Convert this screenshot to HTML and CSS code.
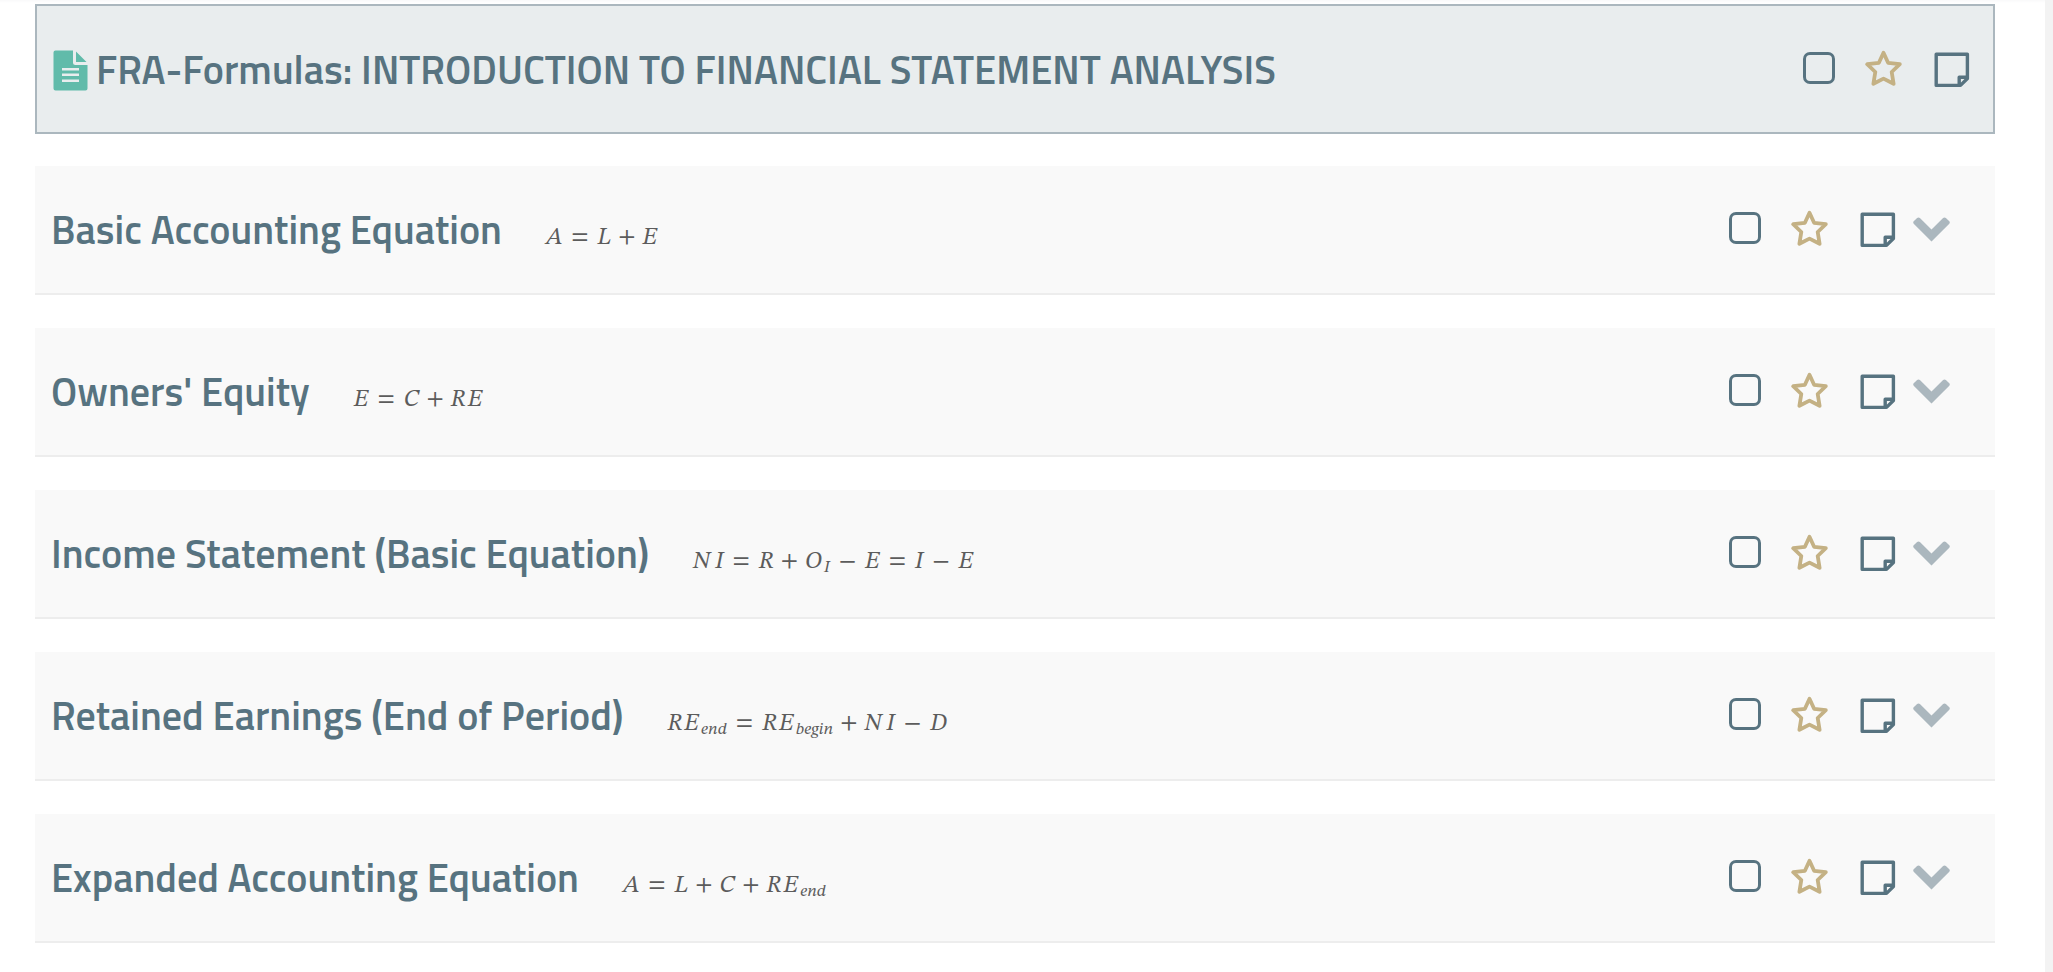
FILE: index.html
```html
<!DOCTYPE html>
<html lang="en">
<head>
<meta charset="utf-8">
<title>FRA-Formulas</title>
<link rel="stylesheet" href="styles.css">
</head>
<body>
<svg class="sprite" aria-hidden="true">
  <symbol id="star" viewBox="0 0 37 37"><path d="M18.5 2.8 23.1 12.8 34.8 14.2 26.7 22 28.6 33.8 18.5 28.6 8.4 33.8 10.3 22 2.2 14.2 13.9 12.8Z" fill="none" stroke="currentColor" stroke-width="3.8" stroke-linejoin="round"/></symbol>
  <symbol id="note" viewBox="0 0 36 36"><path d="M2.2 2.2H33.4V26.5L26.5 33.4H2.2ZM33.4 25.2H25.2V33.4" fill="none" stroke="currentColor" stroke-width="3.4" stroke-linejoin="round"/></symbol>
  <symbol id="chevron" viewBox="0 0 37 25"><path d="M6.9 1.1 18.5 12.6 30.1 1.1Q31.500 -.1 32.900 1.1L36.300 4.300Q37.300 5.500 36.300 6.700L18.500 24.500 .7 6.700Q-.3 5.500 .7 4.300L4.100 1.1Q5.500 -.1 6.900 1.1Z" fill="currentColor"/></symbol>
</svg>
<main class="page">
  <header class="row row-head">
    <h1 class="title"><svg class="file" viewBox="0 0 35 41" aria-hidden="true"><path d="M2.500 .5H20V12.500Q20 15 22.500 15H34.500V38.500Q34.500 40.500 32.500 40.500H2.500Q.5 40.500 .5 38.500V2.500Q.5 .5 2.500 .5ZM23 1.500 33.500 12H23ZM9 18V20.500H26V18ZM9 23.500V26H26V23.500ZM9 29.500V32H26V29.500Z" fill="currentColor" fill-rule="evenodd"/></svg>FRA-Formulas: INTRODUCTION TO FINANCIAL STATEMENT ANALYSIS</h1>
    <div class="tools"><input class="check" type="checkbox" aria-label="Mark all formulas"><button class="tool star" aria-label="Favourite"><svg><use href="#star"/></svg></button><button class="tool note" aria-label="Note"><svg><use href="#note"/></svg></button></div>
  </header>
  <section class="row">
    <h2 class="title">Basic Accounting Equation</h2>
    <p class="formula"><i>A</i><b>=</b><i>L</i><b class="plus">+</b><i>E</i></p>
    <div class="tools"><input class="check" type="checkbox" aria-label="Basic Accounting Equation"><button class="tool star" aria-label="Favourite"><svg><use href="#star"/></svg></button><button class="tool note" aria-label="Note"><svg><use href="#note"/></svg></button><button class="tool chevron" aria-label="Expand"><svg><use href="#chevron"/></svg></button></div>
  </section>
  <section class="row">
    <h2 class="title">Owners' Equity</h2>
    <p class="formula"><i>E</i><b>=</b><i>C</i><b class="plus">+</b><i>R</i><i>E</i></p>
    <div class="tools"><input class="check" type="checkbox" aria-label="Owners' Equity"><button class="tool star" aria-label="Favourite"><svg><use href="#star"/></svg></button><button class="tool note" aria-label="Note"><svg><use href="#note"/></svg></button><button class="tool chevron" aria-label="Expand"><svg><use href="#chevron"/></svg></button></div>
  </section>
  <section class="row">
    <h2 class="title">Income Statement (Basic Equation)</h2>
    <p class="formula"><i class="wide">N</i><i>I</i><b>=</b><i>R</i><b class="plus">+</b><i>O</i><sub>I</sub><b>−</b><i>E</i><b>=</b><i>I</i><b>−</b><i>E</i></p>
    <div class="tools"><input class="check" type="checkbox" aria-label="Income Statement"><button class="tool star" aria-label="Favourite"><svg><use href="#star"/></svg></button><button class="tool note" aria-label="Note"><svg><use href="#note"/></svg></button><button class="tool chevron" aria-label="Expand"><svg><use href="#chevron"/></svg></button></div>
  </section>
  <section class="row">
    <h2 class="title">Retained Earnings (End of Period)</h2>
    <p class="formula"><i>R</i><i>E</i><sub>end</sub><b>=</b><i>R</i><i>E</i><sub>begin</sub><b class="plus">+</b><i class="wide">N</i><i>I</i><b>−</b><i>D</i></p>
    <div class="tools"><input class="check" type="checkbox" aria-label="Retained Earnings"><button class="tool star" aria-label="Favourite"><svg><use href="#star"/></svg></button><button class="tool note" aria-label="Note"><svg><use href="#note"/></svg></button><button class="tool chevron" aria-label="Expand"><svg><use href="#chevron"/></svg></button></div>
  </section>
  <section class="row">
    <h2 class="title">Expanded Accounting Equation</h2>
    <p class="formula"><i>A</i><b>=</b><i>L</i><b class="plus">+</b><i>C</i><b class="plus">+</b><i>R</i><i>E</i><sub>end</sub></p>
    <div class="tools"><input class="check" type="checkbox" aria-label="Expanded Accounting Equation"><button class="tool star" aria-label="Favourite"><svg><use href="#star"/></svg></button><button class="tool note" aria-label="Note"><svg><use href="#note"/></svg></button><button class="tool chevron" aria-label="Expand"><svg><use href="#chevron"/></svg></button></div>
  </section>
</main>
</body>
</html>
```
FILE: styles.css
```css
* { box-sizing: border-box; }
body { margin: 0; background: #fff; color: #577380; }
.sprite { display: none; }
.page {
  display: flex;
  flex-direction: column;
  gap: 33px;
  min-height: 100vh;
  padding: 4px 50px 20px 35px;
  background: linear-gradient(#f9f9fa, #fff 3px);
  border-right: 8px solid #f3f3f3;
}
.row {
  display: flex;
  align-items: baseline;
  padding: 40px 45px 39px 16px;
  background: #f9f9f9;
  border-bottom: 2px solid #ededed;
}
.row-head {
  margin-bottom: -1px;
  padding: 40px 23px 38px 16px;
  background: #e9edee;
  border: 2px solid #abb7be;
}
.title {
  display: flex;
  align-items: center;
  gap: 8px;
  margin: 0;
  font: 600 40px/48px "Titillium Web", Roboto, sans-serif;
  white-space: nowrap;
}
.file {
  flex: none;
  width: 35px;
  height: 41px;
  color: #61bbaa;
}
.formula {
  margin: 0 0 0 43px;
  font: 24px/24px "STIXGeneral", "STIX Two Text", "Liberation Serif", serif;
  color: #5c5c5c;
  white-space: nowrap;
}
.formula i { margin: 0 1px; }
.formula .wide { margin: 0 4px 0 1px; }
.formula b { margin: 0 8px; font-weight: 400; }
.formula .plus { margin: 0 6px; }
.formula sub { margin: 0 1px; font-size: 17px; font-style: italic; line-height: 0; vertical-align: -4px; }
.tools { display: flex; align-self: flex-start; margin-left: auto; height: 44px; align-items: center; }
.check {
  appearance: none;
  width: 32px;
  height: 32px;
  margin: 0 30px 0 0;
  border: 3px solid #577380;
  border-radius: 7px;
}
.tool { display: block; padding: 0; border: 0; background: none; color: #577380; }
.tool svg { display: block; width: 100%; height: 100%; }
.star { width: 37px; height: 37px; margin-right: 32px; color: #c4b184; }
.note { width: 36px; height: 36px; margin-top: 4px; }
.chevron { width: 37px; height: 25px; margin: 2px 0 0 17px; color: #abb7be; }
```
